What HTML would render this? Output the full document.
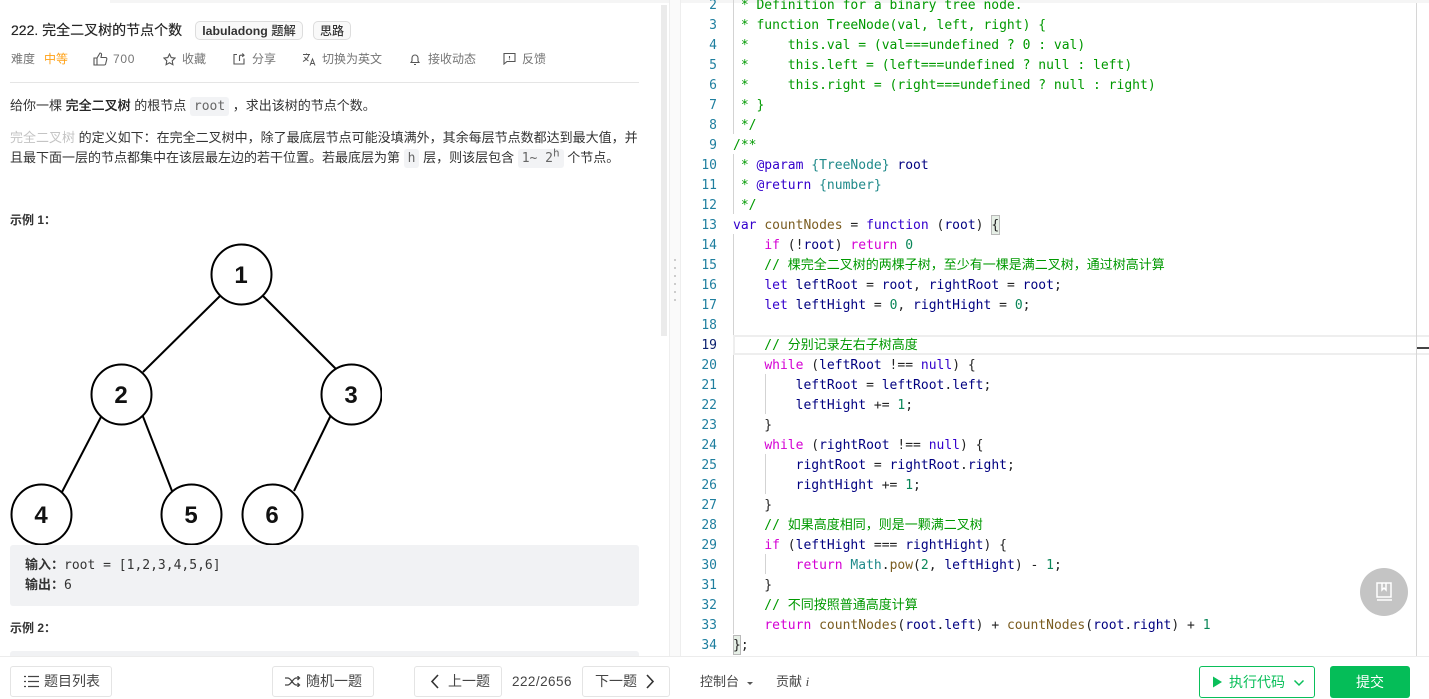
<!DOCTYPE html>
<html lang="zh"><head><meta charset="utf-8"><title>222. 完全二叉树的节点个数</title>
<style>
html,body{margin:0;padding:0;width:1429px;height:699px;overflow:hidden;background:#fff;}
body{position:relative;font-family:"Liberation Sans","Noto Sans CJK SC",sans-serif;color:#262626;font-size:13px;}
.a{position:absolute;white-space:nowrap;}
.g{color:#595959;font-size:12px;line-height:18px;}
.p{color:#333;font-size:13px;line-height:20px;}
.p b{font-weight:500;color:#262626;text-shadow:0 0 .2px #262626}
code{font-family:"DejaVu Sans Mono","Noto Sans CJK SC",monospace;font-size:13px;background:#f2f3f5;border-radius:3px;padding:2px 4px;color:#666;}
.btn{position:absolute;top:666px;height:31px;box-sizing:border-box;border:1px solid #e4e4e4;border-radius:3px;background:#fff;color:#454545;font-size:14px;line-height:29px;white-space:nowrap;}
.btn svg,.g svg{position:absolute;}
#code{position:absolute;left:681px;top:0;width:748px;height:656px;overflow:hidden;font-family:"DejaVu Sans Mono","Noto Sans CJK SC",monospace;font-size:13px;}
.l{position:absolute;left:52px;margin-top:1px;white-space:pre;height:20px;line-height:20px;color:#222;}
.n{position:absolute;left:0;margin-top:1px;width:36px;text-align:right;height:20px;line-height:20px;color:#1f7f9f;}
.c{color:#009900}.k{color:#3300cc}.m{color:#d400d4}.v{color:#000080}.f{color:#7a5c20}.d{color:#098658}.t{color:#1f8a8a}
.ig{position:absolute;width:1px;background:#d3d3d3;}
.ex{font-family:"DejaVu Sans Mono","Noto Sans CJK SC",monospace;font-size:13px;line-height:20px;height:20px;color:#333;white-space:pre;}
.ex b{font-family:"Liberation Sans","Noto Sans CJK SC",sans-serif;font-size:13px;font-weight:bold;line-height:0;}
</style></head><body>

<!-- backgrounds -->
<div class="a" style="left:110px;top:0;width:559px;height:3px;background:#f5f5f5"></div>
<div class="a" style="left:669px;top:0;width:12px;height:656px;background:#fafafa;border-left:1px solid #eee;border-right:1px solid #eee;box-sizing:border-box"></div>
<div class="a" style="left:661px;top:5px;width:6px;height:331px;background:#ebebeb"></div>
<div class="a" style="left:681px;top:0;width:748px;height:3px;background:#f5f5f5"></div>
<div class="a" style="left:674px;top:259px;width:2px;height:2px;background:#ccc"></div>
<div class="a" style="left:674px;top:267px;width:2px;height:2px;background:#ccc"></div>
<div class="a" style="left:674px;top:275px;width:2px;height:2px;background:#ccc"></div>
<div class="a" style="left:674px;top:283px;width:2px;height:2px;background:#ccc"></div>
<div class="a" style="left:674px;top:291px;width:2px;height:2px;background:#ccc"></div>
<div class="a" style="left:674px;top:299px;width:2px;height:2px;background:#ccc"></div>

<!-- header -->
<div class="a" style="left:11px;top:20px;font-size:14px;line-height:20px;font-weight:400;color:#262626;text-shadow:0 0 .4px #262626">222. 完全二叉树的节点个数</div>
<div class="a" style="left:195px;top:21px;width:108px;height:19px;box-sizing:border-box;border:1px solid #ddd;border-radius:5px;background:#f9f9f9;font-size:12.300px;font-weight:bold;line-height:18px;text-align:center;color:#333">labuladong <span style="font-weight:500">题解</span></div>
<div class="a" style="left:313px;top:21px;width:38px;height:19px;box-sizing:border-box;border:1px solid #ddd;border-radius:5px;background:#f9f9f9;font-size:12px;font-weight:500;line-height:18px;text-align:center;color:#333">思路</div>

<div class="a g" style="left:11px;top:50px;color:#757575">难度</div>
<div class="a g" style="left:44px;top:50px;color:#ffa116">中等</div>
<svg class="a" style="left:93px;top:52px" width="15" height="14" viewBox="0 0 15 14" fill="none" stroke="#555" stroke-width="1.100"><path d="M1 6h3v7H1zM4 6l3-5c1.300 0 1.800 1 1.500 2L8 5.500h4.500c1 0 1.500.8 1.300 1.700l-1.200 4.800c-.2.700-.7 1-1.400 1H4"/></svg>
<div class="a g" style="left:113px;top:50px;color:#757575;letter-spacing:.7px">700</div>
<svg class="a" style="left:163px;top:53px" width="13" height="13" viewBox="0 0 13 13" fill="none" stroke="#555" stroke-width="1.100"><path d="M6.500 1l1.700 3.600 3.800.5-2.800 2.700.7 3.900-3.400-1.900-3.400 1.900.7-3.900L1 5.100l3.800-.5z"/></svg>
<div class="a g" style="left:182px;top:50px;color:#757575">收藏</div>
<svg class="a" style="left:233px;top:53px" width="13" height="12" viewBox="0 0 13 12" fill="none" stroke="#555" stroke-width="1.100"><path d="M4 1.500H1v9.500h10V5.500M6.500 8V3.500c0-.8.500-1.300 1.300-1.300H11M9.300.5L11 2.200 9.300 3.900"/></svg>
<div class="a g" style="left:252px;top:50px;color:#757575">分享</div>
<svg class="a" style="left:302px;top:53px" width="15" height="13" viewBox="0 0 15 13" fill="none" stroke="#555" stroke-width="1"><path d="M1 1.500h7M4.500.5v1M7 1.500C6 5 4 7 1 8.500M2.500 4c1 2 2.500 3 4 4M8 12.500L10.500 6l2.500 6.500M9 10.500h3"/></svg>
<div class="a g" style="left:322px;top:50px;color:#757575">切换为英文</div>
<svg class="a" style="left:410px;top:53px" width="10" height="13" viewBox="0 0 10 13" fill="none" stroke="#555" stroke-width="1.100"><path d="M1 9.500h8L8 8V5a3 3 0 0 0-6 0v3zM4 11.500h2"/></svg>
<div class="a g" style="left:428px;top:50px;color:#757575">接收动态</div>
<svg class="a" style="left:503px;top:52px" width="13" height="13" viewBox="0 0 13 13" fill="none" stroke="#555" stroke-width="1.100"><path d="M1 1.500h11v8H4L1 12zM6.500 4v2.500M6.500 7.500v.6"/></svg>
<div class="a g" style="left:522px;top:50px;color:#757575">反馈</div>
<div class="a" style="left:10px;top:82px;width:629px;height:1px;background:#e5e5e5"></div>

<!-- description -->
<div class="a p" style="left:10px;top:96px">给你一棵 <b>完全二叉树</b> 的根节点 <code>root</code> ，求出该树的节点个数。</div>
<div class="a p" style="left:10px;top:128px"><span style="color:#c4c4c4">完全二叉树</span> 的定义如下：在完全二叉树中，除了最底层节点可能没填满外，其余每层节点数都达到最大值，并</div>
<div class="a p" style="left:10px;top:148px">且最下面一层的节点都集中在该层最左边的若干位置。若最底层为第 <code>h</code> 层，则该层包含 <code>1~ 2<sup style="font-size:11px;line-height:0">h</sup></code> 个节点。</div>
<div class="a" style="left:10px;top:211px;font-size:12px;line-height:18px;font-weight:bold;color:#333">示例 1：</div>

<!-- tree -->
<svg class="a" style="left:0;top:236px" width="382" height="309" viewBox="0 236 382 309">
<g stroke="#000" stroke-width="2" fill="none">
<line x1="220" y1="296" x2="143" y2="372"/>
<line x1="263" y1="296" x2="336" y2="369"/>
<line x1="102" y1="415" x2="62" y2="492"/>
<line x1="142" y1="414" x2="172" y2="491"/>
<line x1="331" y1="415" x2="294" y2="491"/>
<circle cx="241.500" cy="274.500" r="30" fill="#fff"/>
<circle cx="121.500" cy="394.500" r="30" fill="#fff"/>
<circle cx="351.500" cy="394.500" r="30" fill="#fff"/>
<circle cx="41.500" cy="514.500" r="30" fill="#fff"/>
<circle cx="191.500" cy="514.500" r="30" fill="#fff"/>
<circle cx="272.500" cy="514.500" r="30" fill="#fff"/>
</g>
<g font-family="Liberation Sans,sans-serif" font-size="24" font-weight="bold" fill="#111" text-anchor="middle">
<text x="241" y="283">1</text><text x="121" y="403">2</text><text x="351" y="403">3</text><text x="41" y="523">4</text><text x="191" y="523">5</text><text x="272" y="523">6</text>
</g></svg>

<!-- example box -->
<div class="a" style="left:10px;top:545px;width:629px;height:61px;background:#f1f2f4;border-radius:3px"></div>
<div class="a ex" style="left:25px;top:556px"><b>输入：</b>root = [1,2,3,4,5,6]</div>
<div class="a ex" style="left:25px;top:576px"><b>输出：</b>6</div>
<div class="a" style="left:10px;top:619px;font-size:12px;line-height:18px;font-weight:bold;color:#333">示例 2：</div>
<div class="a" style="left:10px;top:651px;width:629px;height:5px;background:#f1f2f4;border-radius:3px 3px 0 0"></div>

<!-- code -->
<div id="code">
<div class="ig" style="left:52px;top:0;height:134px"></div>
<div class="ig" style="left:52px;top:154px;height:60px"></div>
<div class="ig" style="left:52px;top:234px;height:400px"></div>
<div class="ig" style="left:84px;top:374px;height:40px"></div>
<div class="ig" style="left:84px;top:454px;height:40px"></div>
<div class="ig" style="left:84px;top:554px;height:20px"></div>
<div class="a" style="left:52px;top:335px;width:695px;height:16px;border:2px solid #eee"></div>
<div class="a" style="left:310px;top:215px;width:7px;height:18px;background:#e6efe6;border:1px solid #b9b9b9"></div>
<div class="a" style="left:52px;top:635px;width:6px;height:18px;background:#e6efe6;border:1px solid #b9b9b9"></div>

<div class="n" style="top:-5px">2</div><div class="l c" style="top:-5px"> * Definition for a binary tree node.</div>
<div class="n" style="top:15px">3</div><div class="l c" style="top:15px"> * function TreeNode(val, left, right) {</div>
<div class="n" style="top:35px">4</div><div class="l c" style="top:35px"> *     this.val = (val===undefined ? 0 : val)</div>
<div class="n" style="top:55px">5</div><div class="l c" style="top:55px"> *     this.left = (left===undefined ? null : left)</div>
<div class="n" style="top:75px">6</div><div class="l c" style="top:75px"> *     this.right = (right===undefined ? null : right)</div>
<div class="n" style="top:95px">7</div><div class="l c" style="top:95px"> * }</div>
<div class="n" style="top:115px">8</div><div class="l c" style="top:115px"> */</div>
<div class="n" style="top:135px">9</div><div class="l c" style="top:135px">/**</div>
<div class="n" style="top:155px">10</div><div class="l c" style="top:155px"> * <span class="k">@param</span> <span class="t">{TreeNode}</span> <span class="v">root</span></div>
<div class="n" style="top:175px">11</div><div class="l c" style="top:175px"> * <span class="k">@return</span> <span class="t">{number}</span></div>
<div class="n" style="top:195px">12</div><div class="l c" style="top:195px"> */</div>
<div class="n" style="top:215px">13</div><div class="l" style="top:215px"><span class="k">var</span> <span class="f">countNodes</span> = <span class="k">function</span> (<span class="v">root</span>) {</div>
<div class="n" style="top:235px">14</div><div class="l" style="top:235px">    <span class="m">if</span> (!<span class="v">root</span>) <span class="m">return</span> <span class="d">0</span></div>
<div class="n" style="top:255px">15</div><div class="l c" style="top:255px">    // 棵完全二叉树的两棵子树，至少有一棵是满二叉树，通过树高计算</div>
<div class="n" style="top:275px">16</div><div class="l" style="top:275px">    <span class="k">let</span> <span class="v">leftRoot</span> = <span class="v">root</span>, <span class="v">rightRoot</span> = <span class="v">root</span>;</div>
<div class="n" style="top:295px">17</div><div class="l" style="top:295px">    <span class="k">let</span> <span class="v">leftHight</span> = <span class="d">0</span>, <span class="v">rightHight</span> = <span class="d">0</span>;</div>
<div class="n" style="top:315px">18</div>
<div class="n" style="top:335px;color:#0b216f">19</div><div class="l c" style="top:335px">    // 分别记录左右子树高度</div>
<div class="n" style="top:355px">20</div><div class="l" style="top:355px">    <span class="m">while</span> (<span class="v">leftRoot</span> !== <span class="k">null</span>) {</div>
<div class="n" style="top:375px">21</div><div class="l" style="top:375px">        <span class="v">leftRoot</span> = <span class="v">leftRoot</span>.<span class="v">left</span>;</div>
<div class="n" style="top:395px">22</div><div class="l" style="top:395px">        <span class="v">leftHight</span> += <span class="d">1</span>;</div>
<div class="n" style="top:415px">23</div><div class="l" style="top:415px">    }</div>
<div class="n" style="top:435px">24</div><div class="l" style="top:435px">    <span class="m">while</span> (<span class="v">rightRoot</span> !== <span class="k">null</span>) {</div>
<div class="n" style="top:455px">25</div><div class="l" style="top:455px">        <span class="v">rightRoot</span> = <span class="v">rightRoot</span>.<span class="v">right</span>;</div>
<div class="n" style="top:475px">26</div><div class="l" style="top:475px">        <span class="v">rightHight</span> += <span class="d">1</span>;</div>
<div class="n" style="top:495px">27</div><div class="l" style="top:495px">    }</div>
<div class="n" style="top:515px">28</div><div class="l c" style="top:515px">    // 如果高度相同，则是一颗满二叉树</div>
<div class="n" style="top:535px">29</div><div class="l" style="top:535px">    <span class="m">if</span> (<span class="v">leftHight</span> === <span class="v">rightHight</span>) {</div>
<div class="n" style="top:555px">30</div><div class="l" style="top:555px">        <span class="m">return</span> <span class="t">Math</span>.<span class="f">pow</span>(<span class="d">2</span>, <span class="v">leftHight</span>) - <span class="d">1</span>;</div>
<div class="n" style="top:575px">31</div><div class="l" style="top:575px">    }</div>
<div class="n" style="top:595px">32</div><div class="l c" style="top:595px">    // 不同按照普通高度计算</div>
<div class="n" style="top:615px">33</div><div class="l" style="top:615px">    <span class="m">return</span> <span class="f">countNodes</span>(<span class="v">root</span>.<span class="v">left</span>) + <span class="f">countNodes</span>(<span class="v">root</span>.<span class="v">right</span>) + <span class="d">1</span></div>
<div class="n" style="top:635px">34</div><div class="l" style="top:635px">};</div>
</div>

<!-- minimap ruler -->
<div class="a" style="left:1416px;top:3px;width:1px;height:653px;background:#d6d6d6"></div>
<div class="a" style="left:1417px;top:347px;width:12px;height:2px;background:#444"></div>

<!-- floating button -->
<div class="a" style="left:1360px;top:568px;width:48px;height:48px;border-radius:50%;background:#c4c4c4"></div>
<svg class="a" style="left:1376px;top:582px" width="17" height="20" viewBox="0 0 17 20" fill="none" stroke="#fff" stroke-width="1.500"><path d="M1 1h14v14H1zM6 1v7l2-2 2 2V1M1 18h15"/></svg>

<!-- footer -->
<div class="a" style="left:0;top:656px;width:1429px;height:1px;background:#ececec"></div>
<div class="btn" style="left:10px;width:102px;padding-left:33px"><svg style="left:13px;top:8px" width="15" height="13" viewBox="0 0 15 13" fill="none" stroke="#444" stroke-width="1.200"><path d="M4 1.500h11M4 6.500h11M4 11.500h11M0 1.500h2M0 6.500h2M0 11.500h2"/></svg>题目列表</div>
<div class="btn" style="left:272px;width:102px;padding-left:33px"><svg style="left:12px;top:9px" width="16" height="11" viewBox="0 0 16 11" fill="none" stroke="#444" stroke-width="1.300"><path d="M0 2h3c3 0 5 7 8 7h3M0 9h3c3 0 5-7 8-7h3M12.500 0l2 2-2 2M12.500 7l2 2-2 2"/></svg>随机一题</div>
<div class="btn" style="left:414px;width:88px;padding-left:33px"><svg style="left:15px;top:7px" width="10" height="15" viewBox="0 0 10 15" fill="none" stroke="#333" stroke-width="1.600"><path d="M8 1L2 7.500 8 14"/></svg>上一题</div>
<div class="a" style="left:512px;top:673px;font-size:13.500px;line-height:18px;color:#454545;letter-spacing:.45px">222/2656</div>
<div class="btn" style="left:582px;width:88px;padding-left:12px"><svg style="left:62px;top:7px" width="10" height="15" viewBox="0 0 10 15" fill="none" stroke="#333" stroke-width="1.600"><path d="M2 1l6 6.500L2 14"/></svg>下一题</div>
<div class="a" style="left:700px;top:673px;font-size:13px;line-height:18px;color:#454545">控制台</div>
<div class="a" style="left:747px;top:682px;width:0;height:0;border-left:3px solid transparent;border-right:3px solid transparent;border-top:3px solid #555"></div>
<div class="a" style="left:776px;top:673px;font-size:13px;line-height:18px;color:#454545">贡献 <i style="font-family:'Liberation Serif',serif">i</i></div>

<div class="a" style="left:1199px;top:666px;width:116px;height:32px;box-sizing:border-box;border:1px solid #0abf5a;border-radius:3px;background:#fff;color:#0abf5a;font-size:14px;line-height:30px;padding-left:29px">执行代码</div>
<svg class="a" style="left:1212px;top:675px" width="12" height="14" viewBox="0 0 12 14"><path d="M1 1.500l9 5.500-9 5.500z" fill="#0abf5a"/></svg>
<svg class="a" style="left:1293px;top:679px" width="12" height="8" viewBox="0 0 12 8" fill="none" stroke="#0abf5a" stroke-width="1.500"><path d="M1.500 1.500L6 6l4.500-4.500"/></svg>
<div class="a" style="left:1330px;top:666px;width:80px;height:32px;border-radius:3px;background:#05bd58;color:#fff;font-size:14px;line-height:32px;text-align:center">提交</div>
</body></html>
